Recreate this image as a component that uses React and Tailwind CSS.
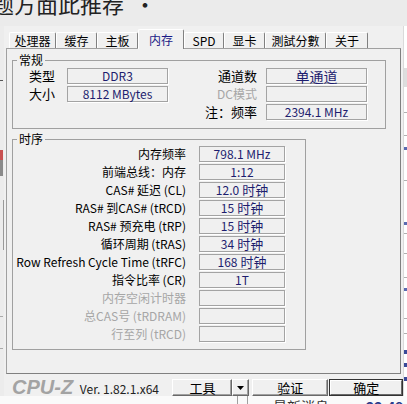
import React from 'react';

const tabs = [
  { name: '处理器', w: 'w-[47px]' },
  { name: '缓存', w: 'w-[41px]' },
  { name: '主板', w: 'w-[41px]' },
  { name: '内存', w: 'w-[46px]', active: true },
  { name: 'SPD', w: 'w-[40px]' },
  { name: '显卡', w: 'w-[41px]' },
  { name: '測試分數', w: 'w-[61px]' },
  { name: '关于', w: 'w-[42px]' },
];

const timings = [
  { label: '内存频率', value: '798.1 MHz' },
  { label: '前端总线：内存', value: '1:12' },
  { label: 'CAS# 延迟 (CL)', value: '12.0', unit: '时钟' },
  { label: 'RAS# 到CAS# (tRCD)', value: '15', unit: '时钟' },
  { label: 'RAS# 预充电 (tRP)', value: '15', unit: '时钟' },
  { label: '循环周期 (tRAS)', value: '34', unit: '时钟' },
  { label: 'Row Refresh Cycle Time (tRFC)', value: '168', unit: '时钟' },
  { label: '指令比率 (CR)', value: '1T' },
  { label: '内存空闲计时器', disabled: true },
  { label: '总CAS号 (tRDRAM)', disabled: true },
  { label: '行至列 (tRCD)', disabled: true },
];

const Field = ({ className = '', children }) => (
  <div
    className={`h-[16px] border border-[#a3a3a3] shadow-[1px_1px_0_#ffffff] flex items-center justify-center leading-[14px] text-[#1d1d6e] whitespace-nowrap ${className}`}
  >
    {children}
  </div>
);

const Button = ({ className = '', children }) => (
  <div
    className={`h-[17px] bg-[#f0f0f0] border border-t-white border-l-white border-r-[#696969] border-b-[#696969] shadow-[inset_-1px_-1px_0_#a0a0a0] flex items-center justify-center text-[13px] leading-[14px] ${className}`}
  >
    {children}
  </div>
);

export default function App() {
  return (
    <div className="w-[407px] h-[404px] overflow-hidden bg-[#ebebeb] font-['Noto_Sans_CJK_SC',sans-serif] text-[12px] text-black flex flex-col">
      {/* page behind the window */}
      <div className="h-[26px] shrink-0 overflow-hidden">
        <div className="-mt-[8px] -ml-[8px] text-[22px] leading-[22px] text-[#222] whitespace-nowrap">
          题方面此推荐<span className="ml-[10px]">·</span>
        </div>
      </div>

      <div className="flex h-[370px] shrink-0">
        {/* left edge of the page behind */}
        <div className="w-[4px] shrink-0 bg-[#ececec] flex flex-col">
          <div className="mt-[54px] h-px w-[3px] bg-[#555]" />
          <div className="mt-[69px] h-[10px] w-[3px] bg-[#c85050]" />
          <div className="h-[16px] w-[3px] bg-[#8a8a8a]" />
          <div className="mt-[24px] h-[50px] w-[4px] border-r border-[#9a9a9a]" />
          <div className="mt-[66px] h-px w-[3px] bg-[#aaa]" />
          <div className="mt-[31px] h-px w-[3px] bg-[#aaa]" />
        </div>

        {/* CPU-Z window */}
        <div className="w-[400px] shrink-0 bg-[#f0f0f0] flex flex-col border-r border-[#dadada]">
          {/* tabs */}
          <div className="h-[22px] shrink-0 flex items-end pl-[5px]">
            {tabs.map((t) =>
              t.active ? (
                <div
                  key={t.name}
                  className={`${t.w} h-[20px] -mb-px relative z-10 bg-[#f0f0f0] border-t border-l border-r border-t-white border-l-white border-r-[#808080] rounded-t-[2px] flex items-center justify-center leading-[14px] text-[#1a1a86]`}
                >
                  {t.name}
                </div>
              ) : (
                <div
                  key={t.name}
                  className={`${t.w} h-[16px] border-t border-l border-r border-t-white border-l-white border-r-[#808080] rounded-t-[2px] flex items-center justify-center leading-[14px]`}
                >
                  {t.name}
                </div>
              )
            )}
          </div>

          {/* tab panel */}
          <div className="ml-[2px] w-[395px] h-[326px] shrink-0 border border-[#a0a0a0] border-r-[#808080] border-b-[#808080] pt-[4px]">
            <fieldset className="ml-[5px] w-[374px] border border-[#a0a0a0] pt-[1px] pb-[8px]">
              <legend className="ml-[4px] px-[2px] text-[12px] leading-[14px]">常规</legend>
              <div className="flex flex-col gap-[2px]">
                <div className="flex h-[16px] items-center">
                  <div className="w-[42px] text-right leading-[16px] text-[13px]">类型</div>
                  <Field className="ml-[12px] w-[101px]">DDR3</Field>
                  <div className="w-[89px] text-right leading-[16px] text-[13px]">通道数</div>
                  <Field className="ml-[9px] w-[101px] text-[14px]">单通道</Field>
                </div>
                <div className="flex h-[16px] items-center">
                  <div className="w-[42px] text-right leading-[16px] text-[13px]">大小</div>
                  <Field className="ml-[12px] w-[101px]">8112 MBytes</Field>
                  <div className="w-[89px] text-right leading-[16px] text-[#a6a6a6]">DC模式</div>
                  <Field className="ml-[9px] w-[101px]" />
                </div>
                <div className="flex h-[16px] items-center">
                  <div className="w-[155px]" />
                  <div className="w-[89px] text-right leading-[16px] text-[13px]">注：频率</div>
                  <Field className="ml-[9px] w-[101px]">2394.1 MHz</Field>
                </div>
              </div>
            </fieldset>

            <fieldset className="ml-[5px] mt-[3px] w-[294px] border border-[#a0a0a0] pb-[7px]">
              <legend className="ml-[4px] px-[2px] text-[12px] leading-[14px]">时序</legend>
              <div className="flex flex-col gap-[2px]">
                {timings.map((r) => (
                  <div key={r.label} className="flex h-[16px] items-center">
                    <div
                      className={`w-[173px] text-right leading-[16px] whitespace-nowrap ${r.disabled ? 'text-[#a6a6a6]' : 'text-black'}`}
                    >
                      {r.label}
                    </div>
                    <Field className="ml-[13px] w-[86px]">
                      {r.value}
                      {r.unit && <span className="ml-[3px] text-[13px]">{r.unit}</span>}
                    </Field>
                  </div>
                ))}
              </div>
            </fieldset>
          </div>

          {/* bottom bar */}
          <div className="h-[22px] shrink-0 flex items-start">
            <div className="ml-[8px] w-[68px] pt-[3px] font-['Liberation_Sans',sans-serif] font-bold italic text-[20px] leading-[20px] text-[#a3a3a3]">
              CPU-Z
            </div>
            <div className="w-[93px] pt-[8px] text-[12px] leading-[14px] text-[#222] whitespace-nowrap">
              Ver. 1.82.1.x64
            </div>
            <div className="mt-[5px] flex">
              <Button className="w-[60px]">工具</Button>
              <Button className="w-[17px]">
                <svg width="7" height="4" viewBox="0 0 7 4">
                  <polygon points="0,0 7,0 3.5,4" fill="#000" />
                </svg>
              </Button>
            </div>
            <Button className="mt-[5px] ml-[3px] w-[76px]">验证</Button>
            <div className="mt-[5px] ml-px w-[74px] h-[17px] border border-[#333] flex">
              <div className="flex-1 border border-t-white border-l-white border-r-[#696969] border-b-[#696969] flex items-center justify-center text-[13px] leading-[13px]">
                确定
              </div>
            </div>
          </div>
        </div>

        {/* right edge of the page behind */}
        <div className="w-[3px] shrink-0 bg-white flex flex-col">
          <div className="mt-[42px] h-[19px] bg-[#dedede]" />
          <div className="mt-[25px] h-px bg-[#b0b0b0]" />
          <div className="mt-[22px] h-px bg-[#b0b0b0]" />
          <div className="mt-[11px] h-[3px] bg-[#5a6ab0]" />
          <div className="mt-[30px] h-px bg-[#b0b0b0]" />
          <div className="mt-[41px] h-[3px] bg-[#5a6ab0]" />
          <div className="mt-[8px] h-px bg-[#b0b0b0]" />
          <div className="mt-[19px] h-px bg-[#b0b0b0]" />
          <div className="mt-[23px] h-px bg-[#b0b0b0]" />
          <div className="mt-[10px] h-[3px] bg-[#5a6ab0]" />
          <div className="mt-[27px] h-px bg-[#b0b0b0]" />
          <div className="mt-[14px] h-px bg-[#b0b0b0]" />
          <div className="mt-[16px] h-[4px] bg-[#3a4a98]" />
          <div className="mt-[9px] h-[4px] bg-[#3a4a98]" />
          <div className="mt-[10px] h-[4px] bg-[#3a4a98]" />
        </div>
      </div>

      {/* bottom of the page behind */}
      <div className="h-[8px] shrink-0 bg-[#fafafa] overflow-hidden flex">
        <div className="w-[237px] shrink-0" />
        <div className="w-px shrink-0 bg-[#a0a0a0]" />
        <div className="w-[9px] shrink-0" />
        <div className="w-px shrink-0 bg-[#a0a0a0]" />
        <div className="w-[25px] shrink-0" />
        <div className="pt-[2px] text-[14px] leading-[16px] text-[#333] whitespace-nowrap">最新消息</div>
        <div className="w-[37px] shrink-0" />
        <div className="pt-[2px] text-[14px] leading-[16px] font-bold text-[#2a3c8c] whitespace-nowrap">22:49</div>
      </div>
    </div>
  );
}
